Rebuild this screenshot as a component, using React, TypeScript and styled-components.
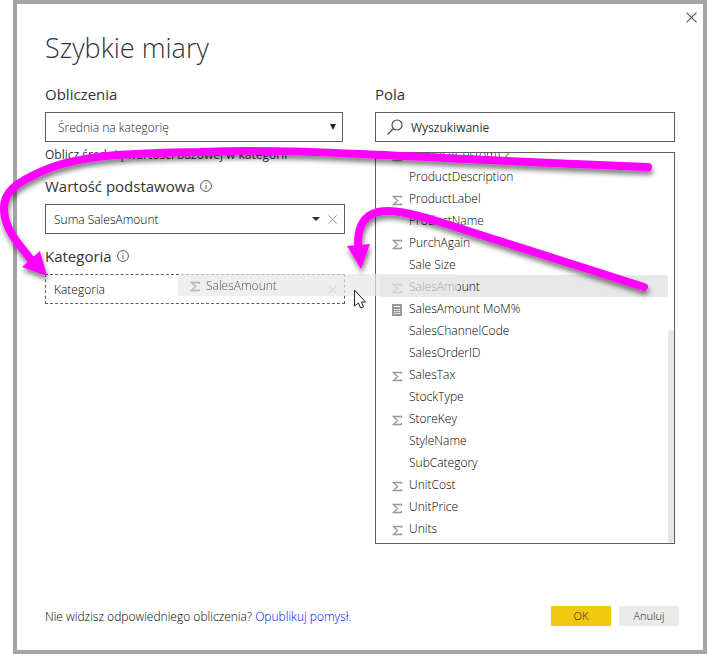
import React from 'react';
import styled, { createGlobalStyle, css } from 'styled-components';

const Global = createGlobalStyle`
  *, *::before, *::after { box-sizing: border-box; }
  body {
    margin: 0;
    background: #fff;
    color: #000;
    font: 300 12px/16px "Open Sans", "Noto Sans", sans-serif;
  }
  button, input, select { font: inherit; color: inherit; }
`;

const Stage = styled.div`
  position: relative;
  min-height: 100vh;
  padding-left: 13px;
  display: flex;
  overflow: hidden;
`;

const Dialog = styled.main`
  flex: 1;
  display: flex;
  flex-direction: column;
  border: 4px solid #a4a4a4;
  padding: 4px 28px 24px;
`;

const Bar = styled.header`
  display: flex;
  justify-content: flex-end;
  margin-right: -26px;
`;

const IconButton = styled.button`
  display: flex;
  align-items: center;
  justify-content: center;
  width: 24px;
  height: 18px;
  padding: 0;
  border: 0;
  background: none;
`;

const CloseButton = styled(IconButton)`
  width: 20px;
`;

const Title = styled.h1`
  margin: 0;
  padding-top: 2px;
  color: #333;
  font-size: 27px;
  font-weight: 300;
  line-height: 40px;
`;

const Columns = styled.div`
  display: grid;
  grid-template-columns: 1fr 1fr;
  gap: 30px;
  margin-top: 16px;
`;

const Column = styled.section`
  display: flex;
  flex-direction: column;
  min-width: 0;
`;

const Label = styled.label<{ $spaced?: boolean }>`
  display: flex;
  align-items: center;
  gap: 5px;
  height: 20px;
  margin: ${p => (p.$spaced ? '12px 0 8px' : '0 0 8px')};
  color: #333;
  font-size: 15px;
  font-weight: 400;
  white-space: nowrap;
`;

const frame = css<{ $dashed?: boolean }>`
  display: flex;
  align-items: center;
  height: 30px;
  border: 1px ${p => (p.$dashed ? 'dashed' : 'solid')} #5f5f5f;
`;

const SelectWrap = styled.div`
  ${frame}
  margin-right: 2px;
  color: #222;
  select {
    appearance: none;
    flex: 1;
    min-width: 0;
    height: 28px;
    border: 0;
    padding: 2px 12px 0;
    background: none;
  }
  svg { margin-right: 5px; }
`;

const Field = styled.div<{ $dashed?: boolean }>`
  ${frame}
  input {
    flex: 1;
    min-width: 0;
    height: 28px;
    padding: 0 8px;
    border: 0;
    background: none;
  }
`;

const SearchField = styled(Field)`
  padding-left: 11px;
  margin-bottom: 10px;
  font-weight: 400;
  input::placeholder { color: #333; opacity: 1; }
`;

const Hint = styled.p`
  margin: 5px 0 0;
  height: 17px;
  color: #333;
  font-weight: 400;
  white-space: nowrap;
`;

const ListFrame = styled.div`
  position: relative;
  display: flex;
  flex-direction: column;
  justify-content: flex-end;
  height: 392px;
  padding: 0 6px 4px 4px;
  border: 1px solid #5f5f5f;
  overflow: hidden;
`;

const List = styled.ul`
  margin: 0;
  padding: 0;
  list-style: none;
`;

const Item = styled.li<{ $active?: boolean }>`
  display: flex;
  align-items: center;
  height: 22px;
  padding: 2px 0 0 12px;
  border-radius: 3px;
  background: ${p => (p.$active ? '#e8e8e8' : 'none')};
`;

const IconSlot = styled.span`
  display: flex;
  width: 17px;
  padding-top: 2px;
`;

const Thumb = styled.span`
  position: absolute;
  right: 0;
  bottom: 0;
  width: 6px;
  height: 213px;
  border-radius: 3px;
  background: #e6e6e6;
`;

const Footer = styled.footer`
  display: flex;
  align-items: center;
  justify-content: space-between;
  margin: auto -4px 0 0;
  a { color: #00f; text-decoration: none; }
`;

const FooterText = styled.span`
  padding-top: 2px;
`;

const Actions = styled.div`
  display: flex;
  gap: 8px;
`;

const Action = styled.button<{ $primary?: boolean }>`
  width: 60px;
  height: 20px;
  padding: 0;
  border: 0;
  background: ${p => (p.$primary ? '#f2c811' : '#eaeaea')};
  color: #222;
  font-size: 11px;
`;

const Ghost = styled.div`
  position: absolute;
  left: 178px;
  top: 274px;
  width: 280px;
  height: 22px;
  display: flex;
  align-items: center;
  gap: 5px;
  padding: 2px 0 0 12px;
  border-radius: 3px;
  background: #e8e8e8;
  opacity: 0.7;
`;

const Overlay = styled.svg`
  position: absolute;
  left: 0;
  top: 0;
  pointer-events: none;
`;

const Sigma = () => (
  <svg width="11" height="11" viewBox="0 0 11 11" fill="none" stroke="#999" strokeWidth="1.3">
    <path d="M9.500 3V1.500H1.500L5.600 5.500 1.500 9.500h8V8" />
  </svg>
);

const Calculator = () => (
  <svg width="10" height="12" viewBox="0 0 10 12">
    <rect width="10" height="12" fill="#999" />
    <path d="M2 2.500h6" stroke="#fff" />
    <path d="M2 5.500h6M2 7.500h6M2 9.500h6" stroke="#fff" strokeDasharray="1.400 .9" />
  </svg>
);

const Cross = ({ size, color }: { size: number; color: string }) => (
  <svg width={size} height={size} viewBox="0 0 10 10" stroke={color} fill="none">
    <path d="M.5.5l9 9M9.5.5l-9 9" />
  </svg>
);

const Info = () => (
  <svg width="12" height="12" viewBox="0 0 12 12" fill="none" stroke="#555">
    <circle cx="6" cy="6" r="5.4" />
    <path d="M6 5v4M6 3v1" />
  </svg>
);

const Triangle = ({ tall }: { tall?: boolean }) => (
  <svg width="8" height="6" viewBox="0 0 8 6" fill={tall ? '#222' : '#12304f'}>
    <path d={tall ? 'M1 0h6L4 6z' : 'M0 1h8L4 5z'} />
  </svg>
);

const Magnifier = () => (
  <svg width="16" height="16" viewBox="0 0 16 16" fill="none" stroke="#444" strokeWidth="1.100">
    <circle cx="10" cy="6" r="5" />
    <path d="M6.500 9.500L.5 15.500" />
  </svg>
);

type Kind = 'sum' | 'calc' | undefined;
const fields: [string, Kind][] = [
  ['Product(Custom) 2', 'sum'],
  ['ProductDescription', undefined],
  ['ProductLabel', 'sum'],
  ['ProductName', undefined],
  ['PurchAgain', 'sum'],
  ['Sale Size', undefined],
  ['SalesAmount', 'sum'],
  ['SalesAmount MoM%', 'calc'],
  ['SalesChannelCode', undefined],
  ['SalesOrderID', undefined],
  ['SalesTax', 'sum'],
  ['StockType', undefined],
  ['StoreKey', 'sum'],
  ['StyleName', undefined],
  ['SubCategory', undefined],
  ['UnitCost', 'sum'],
  ['UnitPrice', 'sum'],
  ['Units', 'sum'],
];

export default function App() {
  return (
    <Stage>
      <Global />
      <Dialog role="dialog" aria-labelledby="title">
        <Bar>
          <CloseButton aria-label="Zamknij"><Cross size={11} color="#555" /></CloseButton>
        </Bar>
        <Title id="title">Szybkie miary</Title>
        <Columns>
          <Column>
            <Label htmlFor="calculation">Obliczenia</Label>
            <SelectWrap>
              <select id="calculation"><option>Średnia na kategorię</option></select>
              <Triangle tall />
            </SelectWrap>
            <Hint>Oblicz średnią wartości bazowej w kategorii</Hint>
            <Label htmlFor="base" $spaced>Wartość podstawowa <Info /></Label>
            <Field>
              <input id="base" defaultValue="Suma SalesAmount" />
              <Triangle />
              <IconButton aria-label="Usuń"><Cross size={9} color="#888" /></IconButton>
            </Field>
            <Label htmlFor="category" $spaced>Kategoria <Info /></Label>
            <Field $dashed>
              <input id="category" defaultValue="Kategoria" />
              <IconButton aria-label="Usuń"><Cross size={9} color="#888" /></IconButton>
            </Field>
          </Column>
          <Column>
            <Label htmlFor="search">Pola</Label>
            <SearchField>
              <Magnifier />
              <input id="search" placeholder="Wyszukiwanie" />
            </SearchField>
            <ListFrame>
              <List>
                {fields.map(([name, kind]) => (
                  <Item key={name} $active={name === 'SalesAmount'}>
                    <IconSlot>
                      {kind === 'sum' && <Sigma />}
                      {kind === 'calc' && <Calculator />}
                    </IconSlot>
                    {name}
                  </Item>
                ))}
              </List>
              <Thumb />
            </ListFrame>
          </Column>
        </Columns>
        <Footer>
          <FooterText>Nie widzisz odpowiedniego obliczenia? <a href="#idea">Opublikuj pomysł.</a></FooterText>
          <Actions>
            <Action $primary>OK</Action>
            <Action>Anuluj</Action>
          </Actions>
        </Footer>
      </Dialog>
      <Ghost><Sigma />SalesAmount</Ghost>
      <Overlay width="707" height="330" viewBox="0 0 707 330" aria-hidden="true">
        <defs>
          <filter id="shadow" x="-10%" y="-10%" width="120%" height="130%">
            <feDropShadow dx="1" dy="4" stdDeviation="2.500" floodColor="#000" floodOpacity="0.5" />
          </filter>
        </defs>
        <g filter="url(#shadow)" stroke="#f0f" strokeWidth="8" strokeLinecap="round" fill="none">
          <path d="M648 167C560 164 430 157 360 154C300 151 240 150 200 152C130 153 80 155 45 170C14 183 4 193 4 208C4 222 10 232 17 242L32 261" />
          <path d="M644 287L440 222C410 213 392 209 378 212C361 216 358 230 358 246" />
          <path d="M22 267L40 251L47 276Z" fill="#f0f" stroke="none" />
          <path d="M347 246L370 244L361 269Z" fill="#f0f" stroke="none" />
        </g>
        <path d="M354.500 290v16l4-3 2 5 3-1-2-5h4z" fill="#fff" stroke="#223" />
      </Overlay>
    </Stage>
  );
}
